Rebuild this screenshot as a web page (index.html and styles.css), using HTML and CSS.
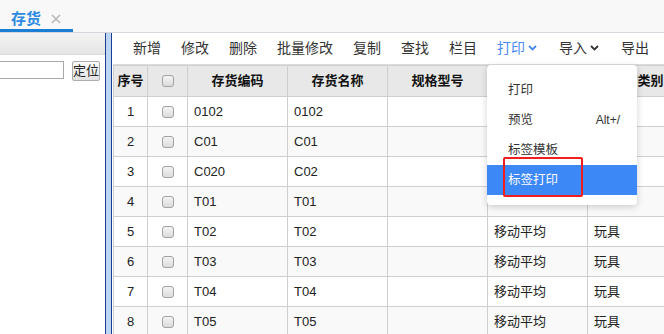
FILE: index.html
```html
<!DOCTYPE html>
<html lang="zh-CN">
<head>
<meta charset="utf-8">
<title>存货</title>
<link rel="stylesheet" href="styles.css">
</head>
<body>
<div class="app">
  <header class="topbar">
    <div class="tab">
      <span class="tab-title">存货</span>
      <svg class="tab-close" width="10" height="10" viewBox="0 0 10 10"><path d="M1 1L9 9M9 1L1 9" stroke="#b8b8b8" stroke-width="1.6" fill="none"/></svg>
    </div>
  </header>
  <div class="main">
    <aside class="side">
      <div class="side-head"></div>
      <div class="search">
        <input class="search-input" type="text">
        <button class="btn">定位</button>
      </div>
    </aside>
    <div class="splitter"></div>
    <section class="content">
      <nav class="toolbar">
        <span class="tool">新增</span>
        <span class="tool">修改</span>
        <span class="tool">删除</span>
        <span class="tool">批量修改</span>
        <span class="tool">复制</span>
        <span class="tool">查找</span>
        <span class="tool">栏目</span>
        <span class="tool tool-open">打印<svg class="chev" width="9" height="6" viewBox="0 0 9 6"><path d="M1 1L4.5 4.5L8 1" stroke="currentColor" stroke-width="1.8" fill="none"/></svg>
          <div class="menu">
            <div class="menu-item">打印</div>
            <div class="menu-item"><span>预览</span><span class="key">Alt+/</span></div>
            <div class="menu-item">标签模板</div>
            <div class="menu-item menu-item-active">标签打印</div>
            <div class="mark"></div>
          </div>
        </span>
        <span class="tool">导入<svg class="chev" width="9" height="6" viewBox="0 0 9 6"><path d="M1 1L4.5 4.5L8 1" stroke="currentColor" stroke-width="1.8" fill="none"/></svg></span>
        <span class="tool">导出</span>
      </nav>
      <div class="grid">
        <div class="row head">
          <div class="cell c-num">序号</div>
          <div class="cell c-chk"><span class="chk"></span></div>
          <div class="cell c-mid">存货编码</div>
          <div class="cell c-mid">存货名称</div>
          <div class="cell c-mid">规格型号</div>
          <div class="cell c-mid"></div>
          <div class="cell c-mid">存货类别</div>
        </div>
        <div class="row">
          <div class="cell c-num">1</div><div class="cell c-chk"><span class="chk"></span></div>
          <div class="cell">0102</div><div class="cell">0102</div><div class="cell"></div><div class="cell"></div><div class="cell"></div>
        </div>
        <div class="row alt">
          <div class="cell c-num">2</div><div class="cell c-chk"><span class="chk"></span></div>
          <div class="cell">C01</div><div class="cell">C01</div><div class="cell"></div><div class="cell"></div><div class="cell"></div>
        </div>
        <div class="row">
          <div class="cell c-num">3</div><div class="cell c-chk"><span class="chk"></span></div>
          <div class="cell">C020</div><div class="cell">C02</div><div class="cell"></div><div class="cell"></div><div class="cell"></div>
        </div>
        <div class="row alt">
          <div class="cell c-num">4</div><div class="cell c-chk"><span class="chk"></span></div>
          <div class="cell">T01</div><div class="cell">T01</div><div class="cell"></div><div class="cell"></div><div class="cell"></div>
        </div>
        <div class="row">
          <div class="cell c-num">5</div><div class="cell c-chk"><span class="chk"></span></div>
          <div class="cell">T02</div><div class="cell">T02</div><div class="cell"></div><div class="cell">移动平均</div><div class="cell">玩具</div>
        </div>
        <div class="row alt">
          <div class="cell c-num">6</div><div class="cell c-chk"><span class="chk"></span></div>
          <div class="cell">T03</div><div class="cell">T03</div><div class="cell"></div><div class="cell">移动平均</div><div class="cell">玩具</div>
        </div>
        <div class="row">
          <div class="cell c-num">7</div><div class="cell c-chk"><span class="chk"></span></div>
          <div class="cell">T04</div><div class="cell">T04</div><div class="cell"></div><div class="cell">移动平均</div><div class="cell">玩具</div>
        </div>
        <div class="row alt">
          <div class="cell c-num">8</div><div class="cell c-chk"><span class="chk"></span></div>
          <div class="cell">T05</div><div class="cell">T05</div><div class="cell"></div><div class="cell">移动平均</div><div class="cell">玩具</div>
        </div>
      </div>
    </section>
  </div>
</div>
</body>
</html>
```
FILE: styles.css
```css
* { box-sizing: border-box; }
html, body { margin: 0; padding: 0; }
body {
  width: 664px;
  height: 334px;
  overflow: hidden;
  background: #fff;
  font-family: "Liberation Sans", "Noto Sans CJK SC", sans-serif;
  color: #333;
}
.app { width: 664px; height: 334px; display: flex; flex-direction: column; }

.topbar {
  height: 33px;
  flex: none;
  background: #f8f8f8;
  border-bottom: 1px solid #d6d6de;
  display: flex;
}
.tab {
  width: 73px;
  height: 32px;
  border-bottom: 3px solid #1b7fd5;
  display: flex;
  align-items: flex-start;
  padding: 11px 0 0 11px;
  gap: 10px;
}
.tab-title {
  font-size: 15px;
  line-height: 15px;
  font-weight: bold;
  color: #2d8ae2;
}
.tab-close { margin-top: 3px; }

.main { flex: 1; display: flex; min-height: 0; }

.side { width: 105px; flex: none; background: #fff; }
.side-head {
  height: 22px;
  background: linear-gradient(#f4f4f4, #e5e5e5);
  border-bottom: 1px solid #dadada;
}
.search { display: flex; align-items: flex-start; margin-top: 6px; }
.search-input {
  width: 66px;
  height: 18px;
  margin: 0 0 0 -2px;
  border: 1px solid #a9a9a9;
  padding: 0;
  background: #fff;
}
.btn {
  margin-left: 8px;
  width: 28px;
  height: 20px;
  padding: 0;
  border: 1px solid #adadad;
  border-radius: 2px;
  background: linear-gradient(#fbfbfb, #e2e2e2);
  font-family: "Liberation Sans", "Noto Sans CJK SC", sans-serif;
  font-size: 13px;
  line-height: 18px;
  color: #222;
}

.splitter {
  width: 7px;
  flex: none;
  background: #bcd5f3;
  border-left: 1px solid #1c3e92;
  border-right: 1px solid #1c3e92;
}

.content {
  flex: 1;
  min-width: 0;
  padding-left: 1px;
  overflow: hidden;
  display: flex;
  flex-direction: column;
}

.toolbar {
  height: 32px;
  flex: none;
  display: flex;
  padding-left: 10px;
  border-bottom: 1px solid #dcdcdc;
  background: #fff;
}
.tool {
  position: relative;
  padding: 0 10px;
  font-size: 14px;
  line-height: 31px;
  color: #333;
  display: flex;
  align-items: center;
  white-space: nowrap;
}
.chev { margin-left: 3px; margin-top: -2px; margin-right: 2px; }
.tool-open { color: #4a8af5; }

.menu {
  position: absolute;
  left: 0;
  top: 32px;
  width: 150px;
  padding: 10px 0;
  background: #fff;
  border-radius: 4px;
  box-shadow: 0 2px 7px rgba(0, 0, 0, 0.18);
  z-index: 5;
}
.menu-item {
  height: 30px;
  line-height: 30px;
  padding: 0 17px 0 21px;
  font-size: 12.5px;
  color: #333;
  display: flex;
  justify-content: space-between;
}
.key { font-size: 12px; }
.menu-item-active { background: #3c88f6; color: #fff; }
.mark {
  position: absolute;
  left: 16px;
  top: 92px;
  width: 80px;
  height: 40px;
  border: 2px solid #f21d1d;
  border-radius: 2px;
}

.grid {
  border-top: 1px solid #cfcfcf;
  border-left: 1px solid #cfcfcf;
  width: 575px;
}
.row {
  display: grid;
  grid-template-columns: 34px 40px repeat(5, 100px);
  height: 30px;
  background: #fff;
}
.row.alt { background: #f9f9f9; }
.row.head {
  height: 31px;
  background: #e8e8e8;
}
.cell {
  border-right: 1px solid #cfcfcf;
  border-bottom: 1px solid #cfcfcf;
  padding-left: 6px;
  font-size: 13px;
  line-height: 29px;
  color: #222;
  white-space: nowrap;
  overflow: hidden;
}
.head .cell {
  font-weight: bold;
  font-size: 13px;
  line-height: 30px;
  color: #111;
}
.c-num { padding: 0; text-align: center; }
.c-mid { padding: 0; text-align: center; }
.c-chk {
  padding: 0;
  display: flex;
  align-items: center;
  justify-content: center;
}
.chk {
  width: 12px;
  height: 12px;
  border: 1px solid #a2a2a2;
  border-radius: 3px;
  background: linear-gradient(#f4f4f4, #dcdcdc);
}
```
